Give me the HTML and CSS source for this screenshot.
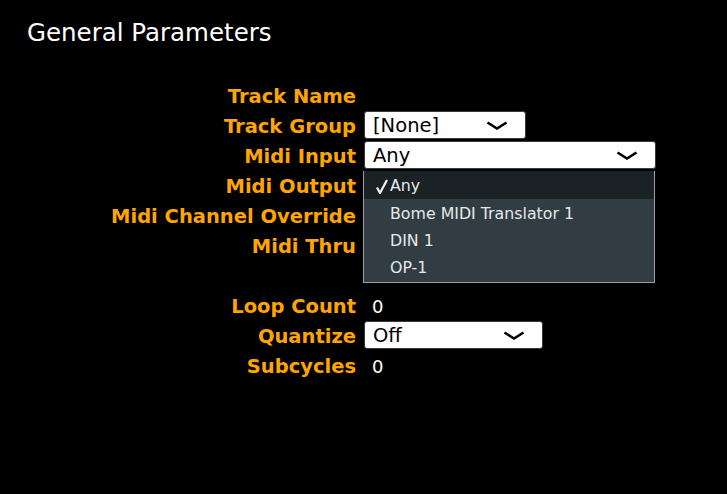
FILE: index.html
```html
<!DOCTYPE html>
<html>
<head>
<meta charset="utf-8">
<link rel="stylesheet" href="styles.css">
</head>
<body>
<div class="page">
  <h1 class="title">General Parameters</h1>
  <div class="form">
    <div class="label">Track Name</div><div class="value"></div>
    <div class="label">Track Group</div>
    <div class="value"><div class="combo w-group"><span>[None]</span><svg class="chev" viewBox="0 0 22 9"><path d="M1.5 1.5 L11 7.5 L20.5 1.5"/></svg></div></div>
    <div class="label">Midi Input</div>
    <div class="value menu-anchor"><div class="combo w-input"><span>Any</span><svg class="chev" viewBox="0 0 22 9"><path d="M1.5 1.5 L11 7.5 L20.5 1.5"/></svg></div>
      <div class="menu">
        <div class="item selected"><svg class="check" viewBox="0 0 12 15"><path d="M1 8.5 L4 14 L11 1"/></svg>Any</div>
        <div class="item">Bome MIDI Translator 1</div>
        <div class="item">DIN 1</div>
        <div class="item">OP-1</div>
      </div>
    </div>
    <div class="label">Midi Output</div><div class="value"></div>
    <div class="label">Midi Channel Override</div><div class="value"></div>
    <div class="label">Midi Thru</div><div class="value"></div>
    <div class="label"></div><div class="value"></div>
    <div class="label">Loop Count</div><div class="value text">0</div>
    <div class="label">Quantize</div>
    <div class="value"><div class="combo w-quant"><span>Off</span><svg class="chev" viewBox="0 0 22 9"><path d="M1.5 1.5 L11 7.5 L20.5 1.5"/></svg></div></div>
    <div class="label">Subcycles</div><div class="value text">0</div>
  </div>
</div>
</body>
</html>
```

FILE: styles.css
```css
html, body {
  margin: 0;
  padding: 0;
  background: #000;
  height: 100%;
}
body {
  font-family: "DejaVu Sans", Verdana, sans-serif;
  color: #fff;
}
.page {
  padding-top: 16px;
}
.title {
  margin: 0 0 0 27px;
  font-weight: normal;
  font-size: 24.5px;
  line-height: 33px;
  color: #fff;
}
.form {
  margin-top: 32px;
  display: grid;
  grid-template-columns: 356px 1fr;
  grid-auto-rows: 30px;
  column-gap: 8px;
}
.label {
  text-align: right;
  font-weight: bold;
  font-size: 19.5px;
  line-height: 32px;
  color: #ffa500;
  white-space: nowrap;
}
.value {
  position: relative;
}
.value.text {
  font-size: 18px;
  line-height: 32px;
  padding-left: 8px;
}
.combo {
  box-sizing: border-box;
  height: 28px;
  background: #fff;
  border: 1px solid #3a3a3a;
  border-radius: 3px;
  display: flex;
  align-items: center;
  justify-content: space-between;
  padding: 1px 17px 0 8px;
  color: #000;
  font-size: 19.5px;
}
.w-group { width: 162px; }
.w-input { width: 292px; }
.w-quant { width: 179px; }
.chev {
  width: 22px;
  height: 9px;
  fill: none;
  stroke: #000;
  stroke-width: 2.6;
  stroke-linecap: butt;
  stroke-linejoin: miter;
}
.menu {
  position: absolute;
  left: -1px;
  top: 30px;
  width: 292px;
  box-sizing: border-box;
  height: 112px;
  background: #323d43;
  border: 1px solid #9aa0a3;
  border-top: none;
  z-index: 2;
}
.item {
  height: 27px;
  line-height: 29px;
  padding-left: 26px;
  font-size: 15.8px;
  color: #e6e8e8;
  position: relative;
}
.item.selected {
  height: 28px;
  line-height: 30px;
  background: #1b2226;
}
.check {
  position: absolute;
  left: 12px;
  top: 8px;
  width: 12px;
  height: 15px;
  fill: none;
  stroke: #f2f2f2;
  stroke-width: 2.2;
}
```
